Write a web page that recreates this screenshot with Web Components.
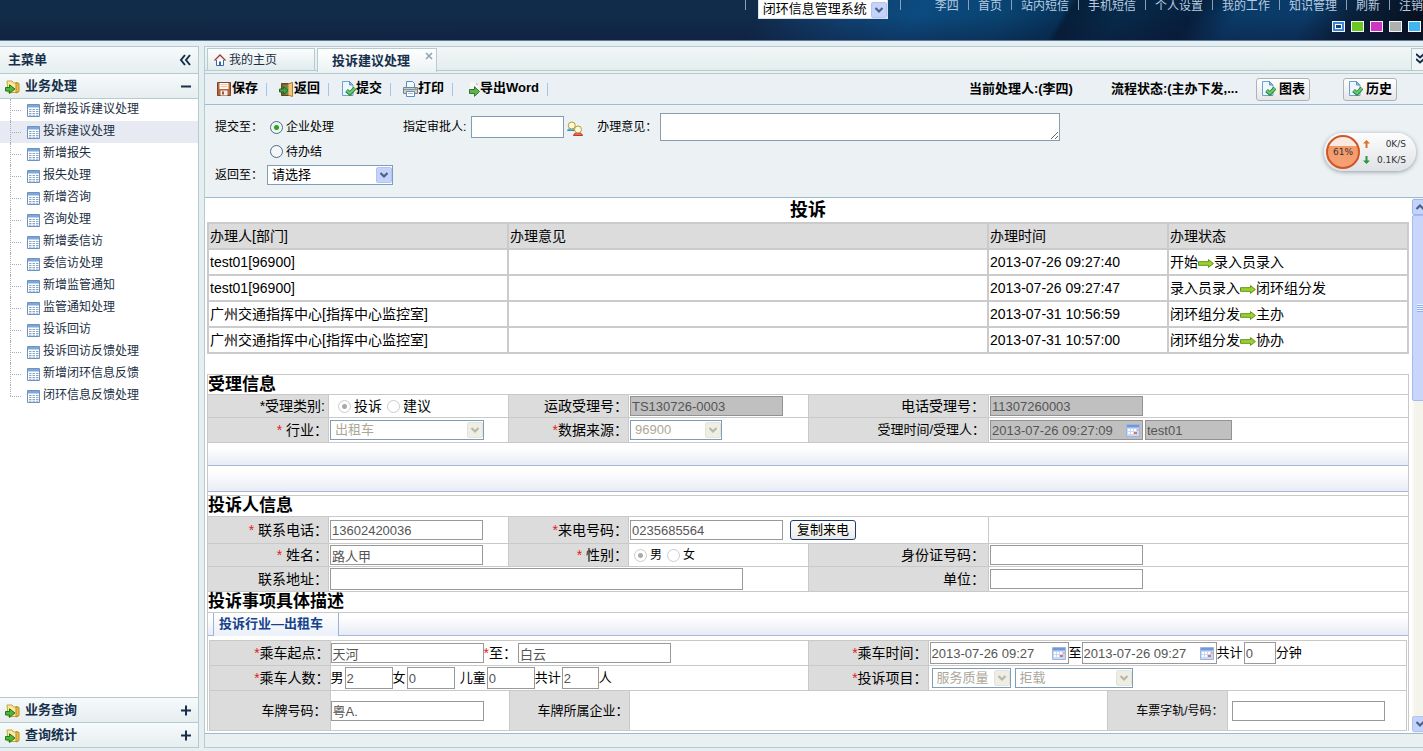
<!DOCTYPE html>
<html lang="zh-CN">
<head>
<meta charset="utf-8">
<title>闭环信息管理系统</title>
<style>
  html, body { height: 100%; margin: 0; }
  body { font: 12px/16px "Liberation Sans", "Noto Sans CJK SC", sans-serif; color: #000; background: #e5eef0; overflow: hidden; }
</style>
</head>
<body>
<app-shell></app-shell>
<script>
const define = (name, html, setup) => {
  const tpl = document.createElement('template');
  tpl.innerHTML = html;
  customElements.define(name, class extends HTMLElement {
    constructor() {
      super();
      this.attachShadow({ mode: 'open' }).append(tpl.content.cloneNode(true));
    }
    connectedCallback() { if (setup) setup(this, this.shadowRoot); }
  });
};

/* ---------- icons ---------- */
const ICONS = {
  folder: [15, 15, '<path d="M2 2h5l1.500 2H13v9.500H3z" fill="#fbe9a0" stroke="#c9a23a"/><path d="M11 3.500l3 1v8l-3 1.500z" fill="#e9bd4b" stroke="#b98a22"/><path d="M.5 8.500h4V5.800L10 10l-5.500 4.500V12h-4z" fill="#4db53c" stroke="#1f7a1b"/>'],
  form: [13, 13, '<path d="M.5.500h12v12H.5z" fill="#fff" stroke="#6d93c1"/><path d="M1 1h11v2.500H1z" fill="#7fa6d6"/><path d="M2 5.500h2.500M5.500 5.500H8M9 5.500h2.500M2 7.500h2.500M5.500 7.500H8M9 7.500h2.500M2 9.500h2.500M5.500 9.500H8M9 9.500h2.500M2 11.200h2.500M5.500 11.200H8M9 11.200h2.500" stroke="#86a9c9"/>'],
  save: [14, 14, '<path d="M.5.500h13v13H.5z" fill="#b5653b" stroke="#7f4325"/><path d="M2.500 1h9v6h-9z" fill="#fff"/><path d="M3.500 2.700h7M3.500 4.700h7" stroke="#f0b98c"/><path d="M3.500 8.500h7v5h-7z" fill="#f3efec"/><path d="M5 9.500h2v3H5z" fill="#9b5a38"/>'],
  door: [15, 15, '<path d="M2.500 1.500h10v12h-10z" fill="#8a5a2b" stroke="#6e4319"/><path d="M4 3h5v10H4z" fill="#5c8a52"/><path d="M9 2l4.500-1.500v14L9 13z" fill="#f1c77a" stroke="#b17b2e"/><path d="M.5 7h4V4.500L9 8.500l-4.500 4V10h-4z" fill="#43a047" stroke="#1e6b24"/>'],
  check: [15, 16, '<path d="M1.500.500h7L12 4v10.500H1.500z" fill="#eef6ff" stroke="#6d9fd0"/><path d="M8.500.500V4H12z" fill="#8fbbe8" stroke="#5d93ca"/><path d="M5.500 9.500l3.500 3 5-5.500" fill="none" stroke="#2c7f36" stroke-width="4"/><path d="M5.800 9.500l3.200 2.800 4.800-5" fill="none" stroke="#63cf68" stroke-width="2.200"/>'],
  print: [15, 16, '<path d="M3.500.500h6l2 2V7h-8z" fill="#f4f9ff" stroke="#5b8fc0"/><path d="M.5 6.500h14v6H.5z" fill="#c9cdd2" stroke="#7d838a"/><path d="M1 8.500h13" stroke="#8b9199"/><path d="M3.500 10.500h8v5h-8z" fill="#fff" stroke="#5b8fc0"/><path d="M5 12.500h5" stroke="#9dbce0"/><circle cx="12.500" cy="7.800" r=".8" fill="#5abf50"/>'],
  export: [15, 16, '<path d="M5 1h6l3 3v8H5z" fill="#f7f7f7"/><path d="M11 1l2.500 3H11z" fill="#c9c4c8"/><path d="M4.500 8.500h5V5.700l5 4.800-5 4.800v-2.800h-5z" fill="#62b04e" stroke="#2f7c27"/>'],
  users: [16, 16, '<path d="M.5 9.500c0-2.500 7.500-2.500 8 0z" fill="#6fc6ee" stroke="#2a95cc"/><circle cx="4.800" cy="4.500" r="3.500" fill="#fff9dc" stroke="#b89b2e"/><path d="M6.500 14.500c0-3.500 9-3.500 9 0z" fill="#f2645a" stroke="#c9302c"/><circle cx="11" cy="8.500" r="3.500" fill="#fff9dc" stroke="#b89b2e"/>'],
  home: [12, 12, '<path d="M2.500 6v5.500h7V6" fill="#fff" stroke="#3667a6"/><path d="M.5 6.500L6 1l5.500 5.500" fill="none" stroke="#a33a3a" stroke-width="1.300"/><path d="M5 7.500h2v4H5z" fill="#3667a6"/>'],
  next: [16, 9, '<path d="M.5 2.700h10V.6L15.400 4.500l-4.900 3.900V6.300H.5z" fill="#9fd02c" stroke="#5c9419"/>'],
  calendar: [14, 13, '<path d="M.5.500h13v12H.5z" fill="#c9d9f4" stroke="#9db6df"/><path d="M1 1h12v2.500H1z" fill="#7098dc"/><path d="M2 5h2v2H2zM5 5h2v2H5zM8 5h2v2H8zM2 8h2v2H2zM5 8h2v2H5z" fill="#fff"/><path d="M11 5h2v2h-2z" fill="#e8b0a4"/><path d="M8 8h3v2H8z" fill="#d9745c"/>'],
  close: [8, 8, '<path d="M1 1l6 6M7 1L1 7" stroke="#92a5b0" stroke-width="1.700"/>'],
  collapse: [12, 12, '<path d="M6 1L2 6l4 5M11 1L7 6l4 5" fill="none" stroke="#16304c" stroke-width="2"/>'],
  expand: [11, 11, '<path d="M0 1l4 3.500L8 1M0 6l4 3.500L8 6" fill="none" stroke="#16304c" stroke-width="2"/>'],
  minus: [11, 11, '<path d="M1 5.500h10" stroke="#16304c" stroke-width="2"/>'],
  plus: [11, 11, '<path d="M1 5.500h10M6 .5v10" stroke="#16304c" stroke-width="2"/>'],
  down: [16, 16, '<rect x=".5" y=".5" width="15" height="15" rx="1.500" fill="var(--btn,#c3d3fb)" stroke="var(--btn-line,#b1c4f0)"/><path d="M4.500 6L8 9.500 11.500 6" fill="none" stroke="var(--mark,#4d6185)" stroke-width="2.200"/>'],
  up: [16, 16, '<rect x=".5" y=".5" width="15" height="15" rx="1.500" fill="#c3d3fb" stroke="#9db5ec"/><path d="M4.500 10L8 6.500 11.500 10" fill="none" stroke="#4d6185" stroke-width="2.200"/>'],
};
define('ui-icon', '<style>:host{display:inline-block;flex:none;line-height:0}svg{display:block}</style>', (el, root) => {
  const [w, h, body] = ICONS[el.getAttribute('name')];
  if (root.querySelector('svg')) return;
  root.innerHTML += `<svg width="${w}" height="${h}" viewBox="0 0 ${w} ${h}" aria-hidden="true">${body}</svg>`;
});

/* ---------- styles shared by every form area ---------- */
const CONTROLS = `
  * { box-sizing: border-box; }
  input, textarea, select, button { font: inherit; margin: 0; color: inherit; }
  input:not([type=radio]), textarea { display: block; border: 1px solid #999; background: #fff; color: #555; padding: 0 1px; border-radius: 0; height: 20px; width: 153px; flex: none; font-size: 13px; line-height: 18px; outline: 0; }
  input[readonly].off { background: #c0c0c0; border-color: #929292; }
  input[type=radio] { appearance: none; width: 13px; height: 13px; border: 1px solid #4a6c92; border-radius: 50%; flex: none; background: #f4f6f7; }
  input[type=radio]:checked { background: radial-gradient(circle, #2aa12a 0 2px, #e8f3e8 3px, #f7f9f7 6px); }
  input[type=radio]:disabled { border-color: #ccc; background: #fff; }
  input[type=radio]:checked:disabled { background: radial-gradient(circle, #aaa 0 2px, #fff 3px); }
  .select { display: grid; flex: none; font-size: 13px; }
  .select > * { grid-area: 1 / 1; }
  .select ui-icon { place-self: center end; margin-right: 1px; pointer-events: none; }
  select { appearance: none; width: 100%; height: 20px; border: 1px solid #7f9db9; border-radius: 0; background: #fff; padding: 0 18px 0 4px; line-height: 18px; outline: 0; }
  select:disabled { color: #aca899; opacity: 1; }
  .dim { --btn: #efeee4; --btn-line: #e4e3d8; --mark: #b8b7a8; }
  .dated { display: grid; flex: none; }
  .dated > * { grid-area: 1 / 1; }
  .dated ui-icon { place-self: center end; margin-right: 3px; }
`;

/* ---------- page frame ---------- */
define('app-shell', `
<style>
  :host { display: flex; flex-direction: column; height: 100vh; overflow: hidden; position: relative; }
  .body { flex: 1; min-height: 0; display: flex; gap: 5px; padding: 5px 0 3px; }
  side-menu { flex: none; width: 199px; }
  main { flex: 1; min-width: 0; display: flex; flex-direction: column; border: solid #b4cbcf; border-width: 1px 0 1px 1px; box-sizing: border-box; background: #eaf0f2; }
  .scroll { flex: 1; min-height: 0; display: flex; border: solid #9bbbd0; border-width: 1px 0; background: #fff; }
  .sheet { flex: 1; min-width: 0; overflow: hidden; padding: 0 2px; }
  .foot { height: 13px; flex: none; }
  speed-meter { position: absolute; top: 133px; right: 7px; }
</style>
<app-header></app-header>
<div class="body">
  <side-menu></side-menu>
  <main>
    <tab-bar></tab-bar>
    <tool-bar></tool-bar>
    <submit-form></submit-form>
    <div class="scroll">
      <div class="sheet"><history-table></history-table><case-form></case-form><ride-form></ride-form></div>
      <scroll-rail></scroll-rail>
    </div>
    <div class="foot"></div>
  </main>
</div>
<speed-meter></speed-meter>`);

define('app-header', `
<style>${CONTROLS}
  :host { display: grid; grid-template-columns: minmax(0, 1fr) auto; flex: none; height: 41px; box-sizing: border-box; border-bottom: 1px solid #5c7ba0; color: #b7cce0;
    background: linear-gradient(180deg, rgba(16,20,40,0) 40%, rgba(16,20,50,.35)), linear-gradient(120deg, #112c48 0, #112b4b 53%, #10406f 59%, #0c4b80 64%, #094370 70%, #06335a 74%, #061f3a 74.500%, #072a4a 78%, #061f3c 83%, #0a3b69 86%, #0b3a68 91%, #09213c 94%, #070d1a 100%); }
  .system { display: flex; align-items: flex-start; justify-content: flex-end; gap: 12px; padding-right: 34px; }
  .bar { width: 1px; height: 10px; background: #8aa0b6; flex: none; }
  .select { width: 130px; color: #000; }
  .select select { height: 19px; border-top: 0; border-color: #d6e0ea; }
  .right { display: flex; flex-direction: column; align-items: flex-end; gap: 9px; }
  nav { display: flex; gap: 9px; line-height: 12px; }
  a { color: inherit; text-decoration: none; white-space: nowrap; }
  .skins { display: flex; gap: 6px; margin-right: 2px; }
  .skins button { width: 13px; height: 11px; padding: 0; border: 1px solid #f2f6fa; background: var(--c); display: grid; place-items: center; }
  .skins i { width: 7px; height: 5px; border: 1px solid #fff; background: #1b3f7a; }
</style>
<div class="system"><span class="bar"></span>
  <span class="select"><select aria-label="系统"><option>闭环信息管理系统</option></select><ui-icon name="down"></ui-icon></span>
  <span class="bar"></span></div>
<div class="right">
  <nav><a href="#">李四</a><span class="bar"></span><a href="#">首页</a><span class="bar"></span><a href="#">站内短信</a><span class="bar"></span><a href="#">手机短信</a><span class="bar"></span><a href="#">个人设置</a><span class="bar"></span><a href="#">我的工作</a><span class="bar"></span><a href="#">知识管理</a><span class="bar"></span><a href="#">刷新</a><span class="bar"></span><a href="#">注销</a></nav>
  <div class="skins"><button style="--c:#3b86d8" aria-label="蓝色"><i></i></button><button style="--c:#6cc820" aria-label="绿色"></button><button style="--c:#cf36c4" aria-label="紫色"></button><button style="--c:#aeb0ae" aria-label="灰色"></button><button style="--c:#42b4ef" aria-label="天蓝"></button></div>
</div>`);

/* ---------- left menu ---------- */
define('menu-head', `
<style>
  :host { display: flex; align-items: center; gap: 5px; height: 24px; flex: none; padding: 0 7px 0 5px; font-weight: bold; font-size: 13px; color: #16304c; background: linear-gradient(#f6fafa, #e6eef0); border-bottom: 1px solid #b4cbcf; }
  span { flex: 1; }
</style>
<slot name="icon"></slot><span><slot></slot></span><slot name="mark"></slot>`);

define('side-menu', `
<style>
  :host { display: flex; flex-direction: column; box-sizing: border-box; border: solid #b4cbcf; border-width: 1px 1px 0 0; background: #fff; color: #1c2f45; }
  .title { height: 26px; padding-left: 8px; }
  .title ui-icon, menu-head ui-icon[slot=mark] { display: block; }
  ul { list-style: none; margin: 0; padding: 0; flex: 1; min-height: 0; overflow: hidden; border-bottom: 1px solid #b4cbcf; }
  li { display: grid; grid-template: 22px / 10px 17px 13px 1fr; align-items: center; }
  li > *, li::before, li::after { grid-row: 1; }
  li::before { content: ""; grid-column: 2; align-self: stretch; border-left: 1px dotted #aab; }
  li:last-child::before { height: 11px; align-self: start; }
  li::after { content: ""; grid-column: 2; width: 11px; border-top: 1px dotted #aab; }
  li ui-icon { grid-column: 3; }
  a { grid-column: 4; padding: 0 0 2px 3px; color: inherit; text-decoration: none; }
  .on { background: #e7eaf2; }
</style>
<menu-head class="title">主菜单<ui-icon slot="mark" name="collapse"></ui-icon></menu-head>
<menu-head><ui-icon slot="icon" name="folder"></ui-icon>业务处理<ui-icon slot="mark" name="minus"></ui-icon></menu-head>
<ul></ul>
<menu-head><ui-icon slot="icon" name="folder"></ui-icon>业务查询<ui-icon slot="mark" name="plus"></ui-icon></menu-head>
<menu-head><ui-icon slot="icon" name="folder"></ui-icon>查询统计<ui-icon slot="mark" name="plus"></ui-icon></menu-head>`, (el, root) => {
  root.querySelector('ul').innerHTML = ['新增投诉建议处理', '投诉建议处理', '新增报失', '报失处理', '新增咨询', '咨询处理', '新增委信访', '委信访处理', '新增监管通知', '监管通知处理', '投诉回访', '投诉回访反馈处理', '新增闭环信息反馈', '闭环信息反馈处理']
    .map((t, i) => `<li${i === 1 ? ' class="on"' : ''}><ui-icon name="form"></ui-icon><a href="#">${t}</a></li>`).join('');
});

/* ---------- tabs and toolbar ---------- */
define('tab-bar', `
<style>
  :host { display: block; flex: none; border-bottom: 1px solid #b4cbcf; padding-bottom: 2px; }
  .strip { display: flex; gap: 2px; height: 22px; padding: 1px 0 0 2px; border-bottom: 1px solid #b4cbcf; background: linear-gradient(#f2f6f6, #e4edee); }
  .tab { box-sizing: border-box; display: flex; align-items: center; border: 1px solid #b4cbcf; border-bottom: 0; height: 22px; background: linear-gradient(#fbfdfd, #e2ebed); color: #1c2f45; text-decoration: none; }
  .home { width: 108px; padding-left: 6px; gap: 3px; }
  .on { width: 120px; height: 24px; padding: 0 3px 0 14px; justify-content: space-between; font-weight: bold; font-size: 13px; color: #16304c; background: linear-gradient(#fff, #ecf2f4); }
  .on button { align-self: flex-start; border: 0; background: none; padding: 3px 0 0; line-height: 0; }
  .more { margin-left: auto; width: 12px; height: 22px; border: solid #b4cbcf; border-width: 1px 0 0 1px; background: #f2f6f7; padding: 0 0 0 4px; overflow: hidden; box-sizing: border-box; }
</style>
<div class="strip">
  <a class="tab home" href="#"><ui-icon name="home"></ui-icon>我的主页</a>
  <span class="tab on">投诉建议处理<button aria-label="关闭"><ui-icon name="close"></ui-icon></button></span>
  <button class="more" aria-label="更多"><ui-icon name="expand"></ui-icon></button>
</div>`);

define('tool-bar', `
<style>
  :host { display: flex; align-items: center; flex: none; height: 30px; padding: 0 26px 0 12px; border-bottom: 1px solid #9cbbdc; font-weight: bold; font-size: 13px; white-space: nowrap; background: #eaf0f3; }
  button { font: inherit; color: inherit; display: flex; align-items: center; }
  .t { border: 0; background: none; padding: 0 0 2px; }
  .t ui-icon { width: 15px; padding-top: 2px; }
  .t::after { content: ""; width: 1px; height: 13px; margin: 2px 12px 0 8px; background: #a3c6e8; }
  .who { margin-left: auto; margin-right: 38px; }
  .state { margin-right: 18px; }
  .b { box-sizing: border-box; width: 54px; height: 23px; justify-content: center; gap: 3px; padding: 0; border: 1px solid #b0b3b5; border-radius: 3px; background: linear-gradient(#fff, #e6e6e8); }
  .b + .b { margin-left: 33px; }
</style>
<button class="t"><ui-icon name="save"></ui-icon>保存</button>
<button class="t"><ui-icon name="door"></ui-icon>返回</button>
<button class="t"><ui-icon name="check"></ui-icon>提交</button>
<button class="t"><ui-icon name="print"></ui-icon>打印</button>
<button class="t"><ui-icon name="export"></ui-icon>导出Word</button>
<span class="who">当前处理人:(李四)</span><span class="state">流程状态:(主办下发,...</span>
<button class="b"><ui-icon name="check"></ui-icon>图表</button>
<button class="b"><ui-icon name="check"></ui-icon>历史</button>`);

define('submit-form', `
<style>${CONTROLS}
  :host { display: flex; flex: none; align-items: flex-start; min-height: 92px; padding: 11px 0 0 10px; box-sizing: border-box; white-space: nowrap; background: #ecf1f4; }
  .left { display: grid; grid-template: 22px 27px 20px / 52px 126px; align-items: center; margin-right: 10px; }
  .opt { grid-column: 2; display: flex; align-items: center; gap: 3px; padding-left: 3px; }
  .mid { display: flex; align-items: center; height: 22px; }
  .mid input { width: 93px; height: 22px; margin: 0 3px 0 5px; border-color: #7f9db9; }
  .mid ui-icon { margin: 4px 14px 0 0; }
  textarea { width: 400px; height: 28px; margin-left: 3px; border-color: #8a9cae; }
</style>
<div class="left">
  <span>提交至：</span><label class="opt"><input type="radio" name="to" checked>企业处理</label>
  <label class="opt"><input type="radio" name="to">待办结</label>
  <label for="back">返回至：</label><span class="select"><select id="back"><option>请选择</option></select><ui-icon name="down"></ui-icon></span>
</div>
<div class="mid"><label for="who">指定审批人:</label><input id="who"><ui-icon name="users"></ui-icon><label for="note">办理意见：</label><textarea id="note"></textarea></div>`);

/* ---------- history ---------- */
define('history-table', `
<style>
  :host { display: block; font-size: 14px; line-height: 20px; }
  h1 { margin: 0; height: 24px; line-height: 24px; font-size: 18px; text-align: center; }
  table { width: 100%; table-layout: fixed; border-collapse: collapse; margin-bottom: 20px; }
  th, td { box-sizing: border-box; height: 26px; padding: 0 1px; border: 2px solid #cbcbcb; text-align: left; font-weight: normal; white-space: nowrap; overflow: hidden; }
  th { background: #dcdcdc; }
  ui-icon { vertical-align: middle; }
</style>
<h1>投诉</h1>
<table>
  <colgroup><col style="width:25%"><col style="width:40%"><col style="width:15%"><col style="width:20%"></colgroup>
  <thead><tr><th>办理人[部门]</th><th>办理意见</th><th>办理时间</th><th>办理状态</th></tr></thead>
  <tbody>
    <tr><td>test01[96900]</td><td></td><td>2013-07-26 09:27:40</td><td>开始<ui-icon name="next"></ui-icon>录入员录入</td></tr>
    <tr><td>test01[96900]</td><td></td><td>2013-07-26 09:27:47</td><td>录入员录入<ui-icon name="next"></ui-icon>闭环组分发</td></tr>
    <tr><td>广州交通指挥中心[指挥中心监控室]</td><td></td><td>2013-07-31 10:56:59</td><td>闭环组分发<ui-icon name="next"></ui-icon>主办</td></tr>
    <tr><td>广州交通指挥中心[指挥中心监控室]</td><td></td><td>2013-07-31 10:57:00</td><td>闭环组分发<ui-icon name="next"></ui-icon>协办</td></tr>
  </tbody>
</table>`);

/* ---------- form sections ---------- */
const ROWS = `
  :host { display: block; font-size: 14px; line-height: 18px; white-space: nowrap; }
  h2 { margin: 0; font-size: 17px; line-height: 19px; height: 20px; border-top: 1px solid #c9c9c9; }
  .box { border: solid #c9c9c9; border-width: 0 1px; }
  .row { display: grid; grid-template-columns: minmax(0,10fr) minmax(0,15fr) minmax(0,10fr) minmax(0,15fr) minmax(0,15fr) minmax(0,35fr); border-top: 1px solid #c9c9c9; min-height: 25px; }
  .row > * { border-left: 1px solid #c9c9c9; display: flex; align-items: center; min-width: 0; }
  .row > :first-child { border-left: 0; }
  .k { background: #dcdcdc; justify-content: flex-end; }
  .v { padding-left: 1px; }
  .s { font-size: 13px; }
  b { color: #e02020; font-weight: normal; white-space: pre; }
  .band { height: 22px; border-bottom: 1px solid #a9b8d6; background: linear-gradient(#fff 20%, #e8ecf5); }
`;
define('case-form', `
<style>${CONTROLS}${ROWS}
  .r23 { min-height: 23px; }
  .r27 { min-height: 27px; }
  .radio { display: flex; align-items: center; gap: 3px; margin-right: 5px; }
  .kinds { padding-left: 9px; }
  .sex { padding-left: 5px; font-size: 12px; }
  .end { border-top: 1px solid #c9c9c9; }
  .end .band { height: 23px; }
  .end .band + .band { height: 26px; }
  .gap { height: 3px; }
  .copy { margin-left: 7px; width: 66px; height: 20px; padding: 0; border: 1px solid #1c3e6e; border-radius: 3px; background: linear-gradient(#fff, #ecebe5); font-size: 13px; line-height: 18px; }
  .tall { height: 21px; }
</style>
<div class="box">
  <h2>受理信息</h2>
  <div class="row r23">
    <span class="k" style="padding-right:3px">*受理类别:</span>
    <span class="v kinds"><label class="radio"><input type="radio" name="kind" checked disabled>投诉</label><label class="radio"><input type="radio" name="kind" disabled>建议</label></span>
    <label class="k" for="yz">运政受理号：</label><span class="v"><input id="yz" class="off" readonly value="TS130726-0003"></span>
    <label class="k" for="tel" style="padding-right:3px">电话受理号：</label><span class="v"><input id="tel" class="off" readonly value="11307260003"></span>
  </div>
  <div class="row">
    <label class="k" for="trade"><b>* </b>行业：</label><span class="v"><span class="select dim" style="width:154px"><select id="trade" disabled><option>出租车</option></select><ui-icon name="down"></ui-icon></span></span>
    <label class="k" for="src"><b>*</b>数据来源：</label><span class="v"><span class="select dim" style="width:92px"><select id="src" disabled><option>96900</option></select><ui-icon name="down"></ui-icon></span></span>
    <label class="k s" for="at" style="padding-right:3px">受理时间/受理人：</label><span class="v"><span class="dated"><input id="at" class="off" readonly value="2013-07-26 09:27:09"><ui-icon name="calendar"></ui-icon></span><input class="off" aria-label="受理人" readonly value="test01" style="width:87px;margin-left:2px"></span>
  </div>
  <div class="end"><div class="band"></div><div class="band"></div><div class="gap"></div></div>
  <h2 class="tall">投诉人信息</h2>
  <div class="row r27">
    <label class="k" for="ph"><b>* </b>联系电话：</label><span class="v"><input id="ph" value="13602420036"></span>
    <label class="k" for="in"><b>*</b>来电号码：</label><span class="v" style="grid-column:span 2"><input id="in" value="0235685564"><button class="copy">复制来电</button></span>
    <span></span>
  </div>
  <div class="row r23">
    <label class="k" for="nm"><b>* </b>姓名：</label><span class="v"><input id="nm" value="路人甲"></span>
    <span class="k"><b>* </b>性别：</span><span class="v sex"><label class="radio"><input type="radio" name="sex" checked disabled>男</label><label class="radio"><input type="radio" name="sex" disabled>女</label></span>
    <label class="k" for="idno" style="padding-right:3px">身份证号码：</label><span class="v"><input id="idno"></span>
  </div>
  <div class="row">
    <label class="k" for="addr">联系地址：</label><span class="v" style="grid-column:span 3"><input id="addr" style="width:413px;height:22px"></span>
    <label class="k" for="unit" style="padding-right:3px">单位：</label><span class="v"><input id="unit"></span>
  </div>
</div>`);

define('ride-form', `
<style>${CONTROLS}${ROWS}
  h2 { height: 21px; }
  .tabs { box-sizing: border-box; height: 24px; padding-left: 5px; border: solid #a9b8d6; border-width: 1px 0; border-top-color: #c9c9c9; background: linear-gradient(#fff 20%, #e6ebf5); }
  .tabs span { display: block; box-sizing: border-box; width: 126px; height: 23px; padding-left: 5px; border: solid #9fb2d6; border-width: 0 1px; background: linear-gradient(#fff, #eaf0f9); color: #15428b; font-size: 13px; line-height: 22px; font-weight: bold; }
  .grid { margin: 4px 1px 0; border: solid #c9c9c9; border-width: 0 1px; }
  .row { grid-template-columns: minmax(0,10fr) minmax(0,40fr) minmax(0,10fr) minmax(0,40fr); }
  .three { grid-template-columns: minmax(0,10fr) minmax(0,15fr) minmax(0,10fr) minmax(0,40fr) minmax(0,10fr) minmax(0,15fr); min-height: 41px; border-bottom: 1px solid #c9c9c9; }
  input:not([type=radio]).t { height: 22px; }
  .v { font-size: 13px; padding-left: 0; }
  .w48 { width: 48px !important; }
  .v label { padding: 0 1px 0 0; }
</style>
<div class="box">
  <h2>投诉事项具体描述</h2>
  <div class="tabs"><span>投诉行业—出租车</span></div>
  <div class="grid">
    <div class="row">
      <label class="k" for="from"><b>*</b>乘车起点：</label>
      <span class="v"><input id="from" value="天河"><label for="dest" style="font-size:14px"><b>*</b>至：</label><input id="dest" value="白云"></span>
      <label class="k" for="d1"><b>*</b>乘车时间：</label>
      <span class="v" style="padding-left:1px"><span class="dated"><input id="d1" class="t" value="2013-07-26 09:27" style="width:139px"><ui-icon name="calendar"></ui-icon></span><label for="d2" style="padding:0">至</label><span class="dated"><input id="d2" class="t" value="2013-07-26 09:27" style="width:135px"><ui-icon name="calendar"></ui-icon></span><label for="mins">共计</label><input id="mins" class="t" value="0" style="width:32px"><label for="mins">分钟</label></span>
    </div>
    <div class="row">
      <label class="k" for="m"><b>*</b>乘车人数：</label>
      <span class="v"><label for="m">男</label><input id="m" class="t w48" value="2"><label for="f">女</label><input id="f" class="t w48" value="0"><label for="c" style="padding-left:5px">儿童</label><input id="c" class="t w48" value="0"><label for="all">共计</label><input id="all" class="t" value="2" style="width:37px"><label for="all">人</label></span>
      <label class="k" for="p1"><b>*</b>投诉项目：</label>
      <span class="v" style="gap:4px;padding-left:3px"><span class="select dim" style="width:79px"><select id="p1" disabled><option>服务质量</option></select><ui-icon name="down"></ui-icon></span><span class="select dim" style="width:118px"><select aria-label="投诉子项目" disabled><option>拒载</option></select><ui-icon name="down"></ui-icon></span></span>
    </div>
    <div class="row three">
      <label class="k s" for="plate" style="padding-right:3px">车牌号码：</label><span class="v"><input id="plate" value="粤A."></span>
      <span class="k s">车牌所属企业：</span><span></span>
      <label class="k" for="ticket" style="font-size:12px;padding-right:3px">车票字轨/号码：</label><span class="v" style="padding-left:4px"><input id="ticket"></span>
    </div>
  </div>
</div>`);

/* ---------- scroll rail and network meter ---------- */
define('scroll-rail', `
<style>
  :host { display: flex; flex-direction: column; width: 12px; flex: none; overflow: hidden; padding: 1px 0; box-sizing: border-box; background: linear-gradient(90deg, #fff, #f5f4ec 4px); }
  ui-icon { margin-left: 1px; }
  .thumb { flex: 185; margin: 0 -5px 0 1px; border: 1px solid #a5bbf0; border-radius: 2px; background: #c8d6fb; display: grid; place-items: center start; padding-left: 4px; }
  .thumb i { width: 8px; height: 8px; background: repeating-linear-gradient(#eef4fe 0 1px, #8cb0f8 1px 2px); }
  .rest { flex: 316; }
</style>
<ui-icon name="up"></ui-icon><div class="thumb"><i></i></div><div class="rest"></div><ui-icon name="down"></ui-icon>`);

define('speed-meter', `
<style>
  :host { display: flex; align-items: center; box-sizing: border-box; width: 92px; height: 38px; padding: 0 10px 0 2px; border-radius: 19px; background: linear-gradient(#fdfdfd, #dfe2e5); box-shadow: 0 1px 4px rgba(60,70,80,.5); font: 10px/16px "DejaVu Sans", sans-serif; color: #333; }
  .dial { box-sizing: border-box; width: 34px; height: 34px; border: 2px solid #cf5526; border-radius: 50%; background: linear-gradient(#fbe9e0 30%, #f39a68 31%, #f6a176); display: grid; place-items: center; font-size: 9px; flex: none; }
  .rates { flex: 1; display: grid; grid-template-columns: 12px 1fr; text-align: right; font-size: 9px; }
  svg { align-self: center; margin-left: 3px; }
</style>
<span class="dial">61%</span>
<span class="rates"><svg width="7" height="8" viewBox="0 0 7 8"><path d="M3.500 0L7 3.500H4.500V8h-2V3.500H0z" fill="#e0701f"/></svg><span>0K/S</span><svg width="7" height="8" viewBox="0 0 7 8"><path d="M3.500 8L0 4.500h2.500V0h2v4.500H7z" fill="#2e9440"/></svg><span>0.1K/S</span></span>`);
</script>
</body>
</html>
